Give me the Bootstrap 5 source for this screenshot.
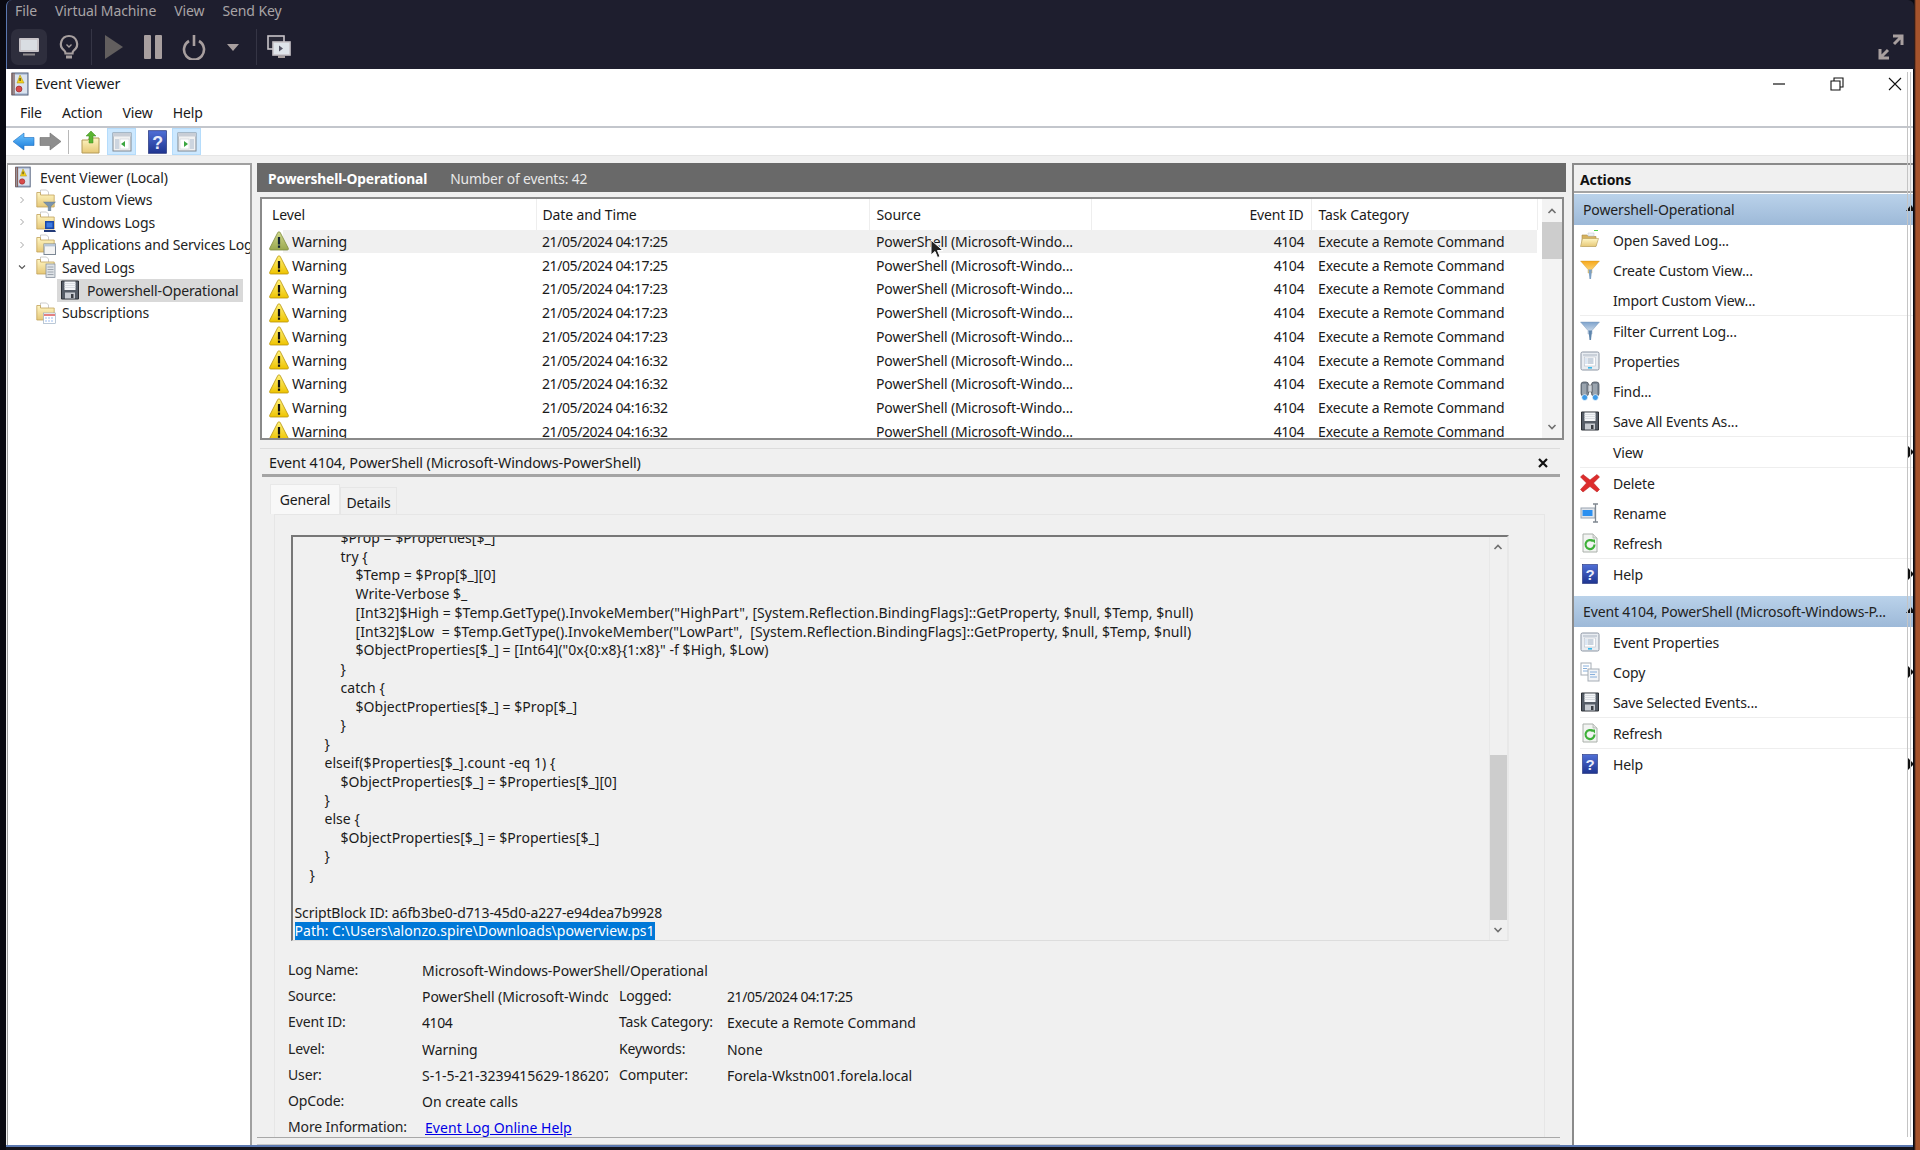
<!doctype html>
<html lang="en">
<head>
<meta charset="utf-8">
<title>Event Viewer</title>
<link href="https://cdn.jsdelivr.net/npm/bootstrap@5.3.0/dist/css/bootstrap.min.css" rel="stylesheet">
<style>
html,body{height:1150px;overflow:hidden}
body{background:linear-gradient(90deg,#0a0a12 0 1914px,#a5532c 1916px);font-family:"Noto Sans","Liberation Sans",sans-serif;font-size:14px;color:#1a1a1a;letter-spacing:-.13px}
.svg-defs{display:block;width:0;height:0}
.vm{height:1150px;margin-left:6px;width:1908px;position:relative}
.vm-top{height:69px;background:#1e1e2e;border-radius:6px 6px 0 0;flex:none;border-left:1px solid #5b78b0}
.vm-menu{height:23px;color:#a8a4a6;font-size:14px;padding:0 0 2px 8px;gap:18px;letter-spacing:-.1px}
.vm-tools{height:46px;padding:6px 0 4px 4px}
.vm-btn{height:36px;display:flex;align-items:center;justify-content:center}
.vm-btn svg{display:block}
.vm-on{background:#2e2e3d;border-radius:7px;width:36px}
.vm-bulb{width:36px;margin-left:4px}
.vm-play{width:44px}.vm-pause{width:34px}.vm-power{width:48px}.vm-caret{width:30px}.vm-screens{width:44px}
.vm-full{width:34px;margin-right:6px}
.vm-sep{width:1px;height:36px;background:#353545}
.win{flex:1 1 auto;background:#f0f0f0;min-height:0;width:1907px}
.win-title{height:31px;background:#fff;padding:0 0 2px 4px;gap:5px;font-size:14.400px;flex:none}
.winbtns{margin-left:auto;gap:40px;padding-right:9.500px}
.win-menu{height:26px;background:#fff;padding:0 0 2px 14px;gap:20px;font-size:14px;flex:none}
.win-line{height:2px;background:#c3c6cc;flex:none}
.win-tool{height:27px;background:#fff;flex:none;padding-left:6px}
.tb{width:29px;height:27px;display:flex;align-items:center;justify-content:center}
.tb-on{background:#cce8ff;border:1px solid #b5dcfb}
.tb-up{margin-left:3px;width:26px}
.tb-on1{margin-left:3px}
.tb-help{margin-left:9px;width:24px}
.tb-on2{margin-left:3px}
.tb-sep{width:1px;height:24px;background:#b8b8b8;margin:0 6px}
.win-band{height:8px;flex:none;background:#f0f0f0;border-top:1px solid #e6e6e6}
.main-area{flex:1 1 auto;min-height:0}
.tree{width:245px;margin-left:1px;background:#fff;border:1px solid #a0a0a0;border-width:2px 2px 0 1px;padding-top:1px;overflow:hidden;white-space:nowrap;flex:none}
.tree-row{height:22.500px;display:flex;align-items:center;font-size:14px;color:#222}
.chev{width:22px;flex:none;padding-left:10px;display:flex}
.ico{flex:none;display:block}
.tree-row .ico{margin-right:6px}
.tree-row .fld{margin-left:6px}
.tree-row .rootico{margin-left:6px;margin-right:8px}
.tree-sel{background:#d9d9d9;height:23px;margin:0 7px 0 49px;padding-left:3px}
.tree-sel .ico{margin-right:7px}
.center{width:1309px;margin-left:5px;flex:none;display:flex;flex-direction:column;min-height:0}
.hd-dark{height:29px;background:#696969;color:#e8e8e8;padding:3px 0 0 11px;gap:23px;flex:none;font-size:13.800px}
.hd-dark b{color:#fff;font-weight:700}
.listbox{height:243px;margin:5px 2px 0 3px;background:#fff;border:2px solid #8a8a8a;overflow:hidden;flex:none;padding-left:3px}
.lst{width:1272px;flex:none}
.evt{table-layout:fixed;width:1272px;margin:0;--bs-table-bg:transparent;--bs-table-color:#1a1a1a;font-size:14px;white-space:nowrap}
.evt col:nth-child(1){width:271px}.evt col:nth-child(2){width:333px}.evt col:nth-child(3){width:222px}.evt col:nth-child(4){width:220px}.evt col:nth-child(5){width:226px}
.evt th,.evt td{padding:0 0 0 7px;border:0;font-weight:400;vertical-align:middle;overflow:hidden}
.evt thead th{height:30.500px;border-right:1px solid #eee;padding-top:1px}
.evt tbody td{height:23.750px}
.evt td:nth-child(2),.evt th:nth-child(2){padding-left:6px}
.evt td.cell-id,.evt th.cell-id{text-align:right;padding:0 7px 0 0}
.evt tr.rsel td{background:#f0f0f0}
.evt tr.rsel td:first-child{background:linear-gradient(90deg,#fff 18px,#f0f0f0 18px)}
.num{letter-spacing:-.42px}
.lvl{display:flex;align-items:center;gap:3px;margin-left:-3px}
.sb-v{width:20px;flex:none;background:#f3f3f3;display:flex;flex-direction:column;align-items:center;margin-left:5px;height:100%}
.sb-arrow{height:23px;display:flex;align-items:center;justify-content:center;flex:none;width:100%}
.sb-thumb{background:#cdcdcd;width:100%;flex:none}
.thumb-a{height:37px}.thumb-b{height:165px}
.detail{flex:1 1 auto;min-height:0;margin:8px 6px 0 3px;border-top:1px solid #dcdcdc;display:flex;flex-direction:column}
.dt-head{height:28px;padding:2px 0 0 7px;flex:none;border-bottom:3px solid #a4a4a4;margin-left:2px;font-size:14.350px;letter-spacing:-.1px}
.dt-close{margin-right:11px}
.dt-body{padding:6px 0 0 10px;flex:1 1 auto;min-height:0;overflow:hidden;background:#f0f0f0}
.dt-tabs{height:31px;align-items:flex-end;--bs-nav-tabs-border-width:0;border:0;flex-wrap:nowrap}
.dt-tabs .nav-link{color:#1a1a1a;border:0;border-radius:0;padding:0;margin:0;display:flex;align-items:center;justify-content:center}
.dt-tabs .tab-a{width:70px;height:30px;background:#f8f8f8;border:1px solid #e8e8e8;border-bottom:0}
.dt-tabs .tab-b{width:57px;height:27px;background:#f0f0f0;border:1px solid #e6e6e6;border-bottom:0;padding-top:3px}
.pane{margin:0 15px 0 4px;padding:20px 0 0 15.500px;border:1px solid #e6e6e6;height:640px;background:#f0f0f0}
.codebox{width:1218px;height:406px;border-left:2px solid #777;border-top:2px solid #777;border-bottom:1px solid #ddd;border-right:2px solid #e8e8e8;overflow:hidden;flex:none;background:#f0f0f0}
.codetxt{flex:1 1 auto;padding:0 0 0 2px;margin-top:-8px;white-space:pre;line-height:18.730px;font-size:14px;min-width:0;overflow:hidden;letter-spacing:.05px}
.ln-id{letter-spacing:-.1px}
.ln-path{letter-spacing:.03px}
.i1{padding-left:15px}.i2{padding-left:30px}.i3{padding-left:46px}.i4{padding-left:61px}
.sel-txt{background:#0078d7;color:#fff;display:inline-block;height:18px;line-height:17px}
.sb-w{width:18px;height:100%;flex:none;background:#f0f0f0;display:flex;flex-direction:column;border-left:1px solid #e8e8e8}
.sb-w .sb-arrow{height:20px}
.fields{margin:16px 0 0 -2.500px;font-size:14px;line-height:26.200px;white-space:nowrap}
.f-l{width:134px;flex:none;color:#222}
.f-v{position:relative;top:1px;letter-spacing:-.03px}
.f-v.num{letter-spacing:-.42px}
.f-v1{width:186px;margin-right:11px;overflow:hidden;flex:none}
.f-l2{width:108px;flex:none}
.f-link{color:#0000e6;text-decoration:underline;margin-left:3px;letter-spacing:.05px}
.bottom-strip{height:8px;border-top:1px solid #a8a8a8;border-bottom:1px solid #c8c8c8;background:#f0f0f0;margin:0 6px 0 0;flex:none}
.actions{flex:1 1 auto;margin-left:6px;background:#fff;border-left:2px solid #8a8a8a;border-top:2px solid #8a8a8a;min-width:0;overflow:hidden;white-space:nowrap;font-size:14px}
.ac-hd{height:28px;margin-bottom:1px;background:#f0f0f0;padding:3px 0 0 6px;font-weight:700;border-bottom:2px solid #a4a4a4;color:#111;display:flex;align-items:center}
.ac-sec{height:31px;padding-left:9px;background:linear-gradient(#bad2ea,#9db9d8);color:#222;display:flex;align-items:center;position:relative;flex:none}
.ac-sec::after{content:"";border:5px solid transparent;border-top:0;border-bottom:6px solid #111;position:absolute;right:-3px;top:11px}
.ac-row{height:30px;padding-left:6px;display:flex;align-items:center;position:relative;color:#222}
.ac-row .ico{width:20px;height:20px}
.ac-row span{margin-left:13px}
.ac-row .noi{width:20px;flex:none}
.sub::after{content:"";border:6px solid transparent;border-right:0;border-left:6px solid #111;position:absolute;right:-1px;top:9px}
.ac-sep{height:1px;background:#eee;margin:0 0 0 6px;flex:none}
.ac-gap{height:7px}
.bottom-line{height:5px;background:linear-gradient(#5b78b0 0 2px,#14141c 2px);flex:none;width:1907px}
.rail{position:absolute;left:1901px;top:72px;width:4px;height:1065px;border:1px solid #c4c4c4;border-width:0 1px;pointer-events:none}
.cursor{position:absolute;left:924px;top:239px}
</style>
</head>
<body>
<svg class="svg-defs" aria-hidden="true">
<defs>
<linearGradient id="gy" x1="0" y1="0" x2="0" y2="1"><stop offset="0" stop-color="#fff27a"/><stop offset="1" stop-color="#eec300"/></linearGradient>
<linearGradient id="gd" x1="0" y1="0" x2="0" y2="1"><stop offset="0" stop-color="#cfd88c"/><stop offset="1" stop-color="#9aa84e"/></linearGradient>
<linearGradient id="gf" x1="0" y1="0" x2="0" y2="1"><stop offset="0" stop-color="#fff6c4"/><stop offset="1" stop-color="#e6c877"/></linearGradient>
<linearGradient id="gb" x1="0" y1="0" x2="0" y2="1"><stop offset="0" stop-color="#4f6fd6"/><stop offset="1" stop-color="#1f3590"/></linearGradient>
<linearGradient id="gar" x1="0" y1="0" x2="0" y2="1"><stop offset="0" stop-color="#6ec6ff"/><stop offset="1" stop-color="#1878d8"/></linearGradient>
<linearGradient id="gfn" x1="0" y1="0" x2="0" y2="1"><stop offset="0" stop-color="#7ea3cc"/><stop offset="1" stop-color="#dfe8f2"/></linearGradient>
<linearGradient id="gfo" x1="0" y1="0" x2="0" y2="1"><stop offset="0" stop-color="#f6a81c"/><stop offset="1" stop-color="#ffe08a"/></linearGradient>
<symbol id="warn" viewBox="0 0 20 20"><path d="M10 .8c.6 0 1 .3 1.300.9l8 15.600c.4.8 0 1.700-1 1.700H1.700c-1 0-1.400-.9-1-1.700l8-15.600c.3-.6.7-.9 1.300-.9z" fill="url(#gy)" stroke="#b8930a" stroke-width=".8"/><rect x="8.900" y="6" width="2.200" height="7.500" fill="#111"/><rect x="8.900" y="14.500" width="2.200" height="2.300" fill="#111"/></symbol>
<symbol id="warn2" viewBox="0 0 20 20"><path d="M10 .8c.6 0 1 .3 1.300.9l8 15.600c.4.8 0 1.700-1 1.700H1.700c-1 0-1.400-.9-1-1.700l8-15.600c.3-.6.7-.9 1.300-.9z" fill="url(#gd)" stroke="#7d8a3c" stroke-width=".8"/><rect x="8.900" y="6" width="2.200" height="7.500" fill="#123"/><rect x="8.900" y="14.500" width="2.200" height="2.300" fill="#123"/></symbol>
<symbol id="evlog" viewBox="0 0 20 24"><rect x="2" y="1" width="16" height="22" fill="#b7c6dc" stroke="#54627c"/><path d="M2 1v22M4 1v22" stroke="#7b4b3a" stroke-width="1"/><rect x="5" y="3" width="12" height="18" fill="#dbe3ee"/><path d="M10 3l4 8H7z" fill="#f3d11f" stroke="#a98c0a" stroke-width=".5"/><rect x="9.600" y="6" width=".9" height="3" fill="#111"/><circle cx="9" cy="17" r="3" fill="#d94b4b" stroke="#8b1f1f" stroke-width=".6"/></symbol>
<symbol id="fold" viewBox="0 0 20 22"><path d="M4.500 1h6l2 2v6h-8z" fill="#fff" stroke="#b8b8b8" stroke-width=".7"/><path d="M.8 3.500h3.700v2.500h13.700v12H.8z" fill="url(#gf)" stroke="#c2a25a" stroke-width=".8"/></symbol>
<symbol id="fold-f" viewBox="0 0 20 22"><use href="#fold" width="20" height="22"/><path d="M7.500 13h12l-4.700 4.500V22h-2.600v-4.500z" fill="#7a93ad" stroke="#566e88" stroke-width=".4"/></symbol>
<symbol id="fold-w" viewBox="0 0 20 22"><use href="#fold" width="20" height="22"/><rect x="9" y="10" width="9" height="8" fill="#1947a8"/><rect x="10.500" y="11.500" width="6" height="5" fill="#3d7be0"/><path d="M8 19h11l1 2H8z" fill="#223a78"/></symbol>
<symbol id="fold-a" viewBox="0 0 20 22"><use href="#fold" width="20" height="22"/><rect x="8" y="10" width="11.500" height="10.500" fill="#f4f4f4" stroke="#7c8794"/><rect x="8" y="10" width="11.500" height="2.400" fill="#b8c6d6"/></symbol>
<symbol id="fold-s" viewBox="0 0 20 22"><use href="#fold" width="20" height="22"/><rect x="10" y="8" width="9" height="13.500" fill="#dfe3e7" stroke="#7c8794" stroke-width=".7"/><path d="M11.500 11h6M11.500 13.500h6M11.500 16h6M11.500 18.500h6" stroke="#8d97a2" stroke-width=".8"/></symbol>
<symbol id="fold-c" viewBox="0 0 20 22"><use href="#fold" width="20" height="22"/><rect x="7.500" y="11" width="12" height="10.500" fill="#fff" stroke="#8da3bb" stroke-width=".6"/><path d="M8 13h11" stroke="#d94b4b" stroke-width="1.400"/><path d="M9.500 16h1M12.500 16h1M15.500 16h1M9.500 19h1M12.500 19h1M15.500 19h1" stroke="#3d7be0" stroke-width="1.200"/></symbol>
<symbol id="floppy" viewBox="0 0 20 20"><path d="M1.500 1h17v18h-17z" fill="#555c66" stroke="#2c3036"/><rect x="4.500" y="1.500" width="11" height="8.500" fill="#f4f6f8"/><path d="M4.500 3.500h11M4.500 5.500h11M4.500 7.500h11" stroke="#cfd4da" stroke-width=".7"/><rect x="5" y="12.500" width="10" height="6" fill="#c8ccd2"/><rect x="11" y="14" width="2.500" height="4" fill="#3b3f45"/></symbol>
<symbol id="props" viewBox="0 0 20 20"><rect x="1" y="1" width="18" height="18" rx="1.500" fill="#e9edf2" stroke="#8b95a3"/><rect x="3" y="3" width="14" height="2" fill="#c9d0d9"/><rect x="4.500" y="6" width="11" height="9" fill="#fff" stroke="#b9c0ca" stroke-width=".6"/><path d="M7.500 8h6M7.500 10h6M7.500 12h6" stroke="#7c93ad" stroke-width=".8"/><path d="M5.500 8h1M5.500 10h1M5.500 12h1" stroke="#4f86c6" stroke-width=".8"/><rect x="8" y="16" width="4" height="1.600" fill="#38b6e8"/></symbol>
<symbol id="help" viewBox="2 0 16 20"><rect x="2.500" y="0.500" width="15" height="19" fill="url(#gb)" stroke="#1e2e78" stroke-width=".6"/><text x="10" y="15.500" text-anchor="middle" font-family="Liberation Sans" font-size="15" font-weight="700" fill="#e8ecfa">?</text></symbol>
<symbol id="refresh" viewBox="0 0 20 20"><path d="M3 1h10l4 4v14H3z" fill="#f2f4f2" stroke="#aab0aa"/><path d="M13 1v4h4" fill="#dde0dd" stroke="#aab0aa" stroke-width=".7"/><path d="M14.500 11.500a4.500 4.500 0 1 1-1.500-3.300" fill="none" stroke="#3fb13a" stroke-width="2.200"/><path d="M11 6.500h4v4z" fill="#3fb13a"/></symbol>
<symbol id="del" viewBox="0 0 20 20"><path d="M3 1.500l7 5.500 7-5.500 2.500 2.500-6 6 6 6.500-2.500 2.500-7-5.500-7 5.500L.5 16.500l6-6.500-6-6z" fill="#dd2c2c" stroke="#b71c1c" stroke-width=".5"/></symbol>
<symbol id="rename" viewBox="0 0 20 20"><rect x="1" y="5" width="14" height="10" fill="#e0e4ea" stroke="#9aa4b0"/><rect x="2.500" y="7" width="10" height="6" fill="#2a8ff0"/><path d="M13 1h5M13 19h5M15.500 1v18" stroke="#7f8790" stroke-width="1.300" fill="none"/></symbol>
<symbol id="open" viewBox="0 0 20 20"><path d="M2 5h5l1.500 1.500H16V16H2z" fill="#d6b25e" stroke="#a88c46" stroke-width=".6"/><path d="M0.500 16.500l2-8h16l-2.500 8z" fill="url(#gf)" stroke="#b49a58" stroke-width=".6"/><path d="M8 3h6v3h-6z" fill="#eef2f6" stroke="#b9c0c8" stroke-width=".5"/><rect x="14" y="0" width="4" height="1" fill="#4dd04d"/></symbol>
<symbol id="funnelo" viewBox="0 0 20 20"><path d="M0.500 1h19l-7.500 8.500V13h-4V9.500z" fill="url(#gfo)" stroke="#b78418" stroke-width=".3"/><path d="M8.500 9.500H12L11 19H9.500z" fill="#7da0c4"/></symbol>
<symbol id="funnel" viewBox="0 0 20 20"><path d="M0.500 1h19l-7.500 8.500V13h-4V9.500z" fill="url(#gfn)" stroke="#6f90b4" stroke-width=".4"/><path d="M8.500 9.500H12L11 19H9.500z" fill="#5f86ad"/></symbol>
<symbol id="bino" viewBox="0 0 20 20"><rect x="1" y="1" width="7.500" height="14" rx="2.500" fill="#7c8794" stroke="#3e4650" stroke-width=".7"/><rect x="11.500" y="1" width="7.500" height="14" rx="2.500" fill="#7c8794" stroke="#3e4650" stroke-width=".7"/><rect x="8" y="4" width="4" height="7" fill="#cfd5dc" stroke="#555" stroke-width=".5"/><path d="M3 3v10M5 3v10M14 3v10M16 3v10" stroke="#d6dbe1" stroke-width=".7"/><circle cx="4.700" cy="16.500" r="3" fill="#3f9be8" stroke="#fff" stroke-width=".7"/><circle cx="15.300" cy="16.500" r="3" fill="#3f9be8" stroke="#fff" stroke-width=".7"/></symbol>
<symbol id="copy" viewBox="0 0 20 20"><rect x="1" y="1" width="10" height="12" fill="#fff" stroke="#a6adb5"/><path d="M3 4h6M3 6.500h4M3 9h6" stroke="#7aa7d8" stroke-width=".9"/><rect x="8" y="7" width="11" height="12" fill="#f2f4f7" stroke="#a6adb5"/><path d="M10 10h7M10 12.500h5M10 15h7" stroke="#7aa7d8" stroke-width=".9"/></symbol>
<symbol id="chr" viewBox="0 0 8 8"><path d="M2.500 1l3 3-3 3" fill="none" stroke="#a6a6a6" stroke-width="1"/></symbol>
<symbol id="chd" viewBox="0 0 8 8"><path d="M1 2.500l3 3 3-3" fill="none" stroke="#555" stroke-width="1.100"/></symbol>
<symbol id="chup" viewBox="0 0 10 8"><path d="M1.500 6L5 2.500 8.500 6" fill="none" stroke="#707070" stroke-width="1.600"/></symbol>
<symbol id="chdn" viewBox="0 0 10 8"><path d="M1.500 2L5 5.500 8.500 2" fill="none" stroke="#707070" stroke-width="1.600"/></symbol>
</defs>
</svg>

<div class="vm d-flex flex-column">
  <div class="vm-top">
    <div class="vm-menu d-flex align-items-center"><span>File</span><span>Virtual Machine</span><span>View</span><span>Send Key</span></div>
    <div class="vm-tools d-flex align-items-center">
      <div class="vm-btn vm-on"><svg width="24" height="24" viewBox="0 0 24 24"><rect x="2" y="3" width="20" height="14" rx="1" fill="#c8c4c8"/><rect x="4" y="5" width="16" height="10" fill="#d9dde2"/><rect x="6" y="18.500" width="12" height="2" fill="#8e8a8c"/></svg></div>
      <div class="vm-btn vm-bulb"><svg width="22" height="26" viewBox="0 0 22 26"><path d="M11 2a8 8 0 0 0-5 14.300c1 .9 1.500 2 1.500 3.200h7c0-1.200.5-2.300 1.500-3.200A8 8 0 0 0 11 2z" fill="none" stroke="#a79f9f" stroke-width="2.200"/><rect x="8" y="21.500" width="6" height="3" fill="#a79f9f"/><path d="M8.500 10.500L11 13l2.500-2.500" fill="none" stroke="#a79f9f" stroke-width="1.300"/></svg></div>
      <div class="vm-sep ms-1"></div>
      <div class="vm-btn vm-play"><svg width="20" height="26" viewBox="0 0 20 26"><path d="M1 1l18 12L1 25z" fill="#625e5e"/></svg></div>
      <div class="vm-btn vm-pause"><svg width="20" height="26" viewBox="0 0 20 26"><rect x="1" y="1" width="7" height="24" rx="1" fill="#a89f9f"/><rect x="12" y="1" width="7" height="24" rx="1" fill="#a89f9f"/></svg></div>
      <div class="vm-btn vm-power"><svg width="24" height="26" viewBox="0 0 24 26"><path d="M7 7a10 10 0 1 0 10 0" fill="none" stroke="#a89f9f" stroke-width="2.600"/><path d="M12 1v11" stroke="#a89f9f" stroke-width="2.600"/></svg></div>
      <div class="vm-btn vm-caret"><svg width="12" height="7" viewBox="0 0 12 7"><path d="M0 0h12L6 7z" fill="#a89f9f"/></svg></div>
      <div class="vm-sep ms-2"></div>
      <div class="vm-btn vm-screens"><svg width="24" height="24" viewBox="0 0 24 24"><rect x="1" y="1" width="16" height="13" fill="#2a2a38" stroke="#c8c4c8" stroke-width="1.600"/><rect x="6" y="7" width="17" height="13" fill="#dfe4ea" stroke="#c8c4c8" stroke-width="1.600"/><path d="M12 10.500l4 3-4 3z" fill="#556"/><rect x="11" y="21" width="7" height="2" fill="#a89f9f"/></svg></div>
      <div class="vm-btn vm-full ms-auto"><svg width="26" height="26" viewBox="0 0 26 26"><path d="M15 2h9v9M24 2L16 10M11 24H2v-9M2 24l8-8" fill="none" stroke="#a89f9f" stroke-width="3"/></svg></div>
    </div>
  </div>

  <div class="win d-flex flex-column">
    <div class="win-title d-flex align-items-center">
      <svg class="ico" width="20" height="24"><use href="#evlog"/></svg><span>Event Viewer</span>
      <div class="winbtns d-flex align-items-center">
        <svg width="18" height="18" viewBox="0 0 18 18"><path d="M3 9h12" stroke="#111" stroke-width="1.200"/></svg>
        <svg width="18" height="18" viewBox="0 0 18 18"><path d="M3 6h9v9H3zM6 6V3h9v9h-3" fill="none" stroke="#111" stroke-width="1.100"/></svg>
        <svg width="18" height="18" viewBox="0 0 18 18"><path d="M3 3l12 12M15 3L3 15" stroke="#111" stroke-width="1.100"/></svg>
      </div>
    </div>
    <div class="win-menu d-flex align-items-center"><span>File</span><span>Action</span><span>View</span><span>Help</span></div>
    <div class="win-line"></div>
    <div class="win-tool d-flex align-items-center">
      <svg width="23" height="23" viewBox="0 0 23 23"><path d="M1 11.500L12 3v4.500h10v8H12V20z" fill="url(#gar)" stroke="#1c6dc0" stroke-width=".6"/></svg>
      <svg class="ms-1" width="23" height="23" viewBox="0 0 23 23"><path d="M22 11.500L11 3v4.500H1v8h10V20z" fill="#8e8e8e" stroke="#6f6f6f" stroke-width=".6"/></svg>
      <div class="tb-sep"></div>
      <div class="tb tb-up"><svg width="20" height="24" viewBox="0 0 20 24"><path d="M1 10h6l1.500-2H18v15H1z" fill="url(#gf)" stroke="#b49a58"/><path d="M8 13V6H5l5-5 5 5h-3v7z" fill="#5cb533" stroke="#3d8a1e" stroke-width=".5"/></svg></div>
      <div class="tb tb-on tb-on1"><svg width="20" height="20" viewBox="0 0 20 20"><rect x="1" y="1" width="18" height="18" fill="#f2f2f2" stroke="#7f8792"/><rect x="1" y="1" width="18" height="3.500" fill="#c9ced6"/><rect x="3" y="7" width="4" height="10" fill="#cdd5df"/><rect x="8" y="7" width="9" height="10" fill="#fff" stroke="#c2c8d0" stroke-width=".5"/><path d="M13 9l-4 3 4 3z" fill="#3aa640"/></svg></div>
      <div class="tb tb-help"><svg width="19" height="24"><use href="#help"/></svg></div>
      <div class="tb tb-on tb-on2"><svg width="20" height="20" viewBox="0 0 20 20"><rect x="1" y="1" width="18" height="18" fill="#f2f2f2" stroke="#7f8792"/><rect x="1" y="1" width="18" height="3.500" fill="#c9ced6"/><rect x="13" y="7" width="4" height="10" fill="#cdd5df"/><rect x="3" y="7" width="9" height="10" fill="#fff" stroke="#c2c8d0" stroke-width=".5"/><path d="M7 9l4 3-4 3z" fill="#3aa640"/></svg></div>
    </div>
    <div class="win-band"></div>

    <div class="main-area d-flex">
      <div class="tree">
        <div class="tree-row"><svg class="ico rootico" width="18" height="22"><use href="#evlog"/></svg><span>Event Viewer (Local)</span></div>
        <div class="tree-row"><span class="chev"><svg width="8" height="8"><use href="#chr"/></svg></span><svg class="ico fld" width="20" height="22"><use href="#fold-f"/></svg><span>Custom Views</span></div>
        <div class="tree-row"><span class="chev"><svg width="8" height="8"><use href="#chr"/></svg></span><svg class="ico fld" width="20" height="22"><use href="#fold-w"/></svg><span>Windows Logs</span></div>
        <div class="tree-row"><span class="chev"><svg width="8" height="8"><use href="#chr"/></svg></span><svg class="ico fld" width="20" height="22"><use href="#fold-a"/></svg><span>Applications and Services Logs</span></div>
        <div class="tree-row"><span class="chev"><svg width="8" height="8"><use href="#chd"/></svg></span><svg class="ico fld" width="20" height="22"><use href="#fold-s"/></svg><span>Saved Logs</span></div>
        <div class="tree-row tree-sel"><svg class="ico" width="20" height="20"><use href="#floppy"/></svg><span>Powershell-Operational</span></div>
        <div class="tree-row"><span class="chev"></span><svg class="ico fld" width="20" height="22"><use href="#fold-c"/></svg><span>Subscriptions</span></div>
      </div>

      <div class="center">
        <div class="hd-dark d-flex align-items-center"><b>Powershell-Operational</b><span>Number of events: 42</span></div>
        <div class="listbox d-flex">
          <div class="lst">
            <table class="table table-borderless evt">
              <colgroup><col><col><col><col><col></colgroup>
              <thead><tr><th>Level</th><th>Date and Time</th><th>Source</th><th class="cell-id">Event ID</th><th>Task Category</th></tr></thead>
              <tbody>
                <tr class="rsel"><td><div class="lvl"><svg class="ico" width="20" height="20"><use href="#warn2"/></svg>Warning</div></td><td class="num">21/05/2024 04:17:25</td><td>PowerShell (Microsoft-Windo...</td><td class="cell-id num">4104</td><td>Execute a Remote Command</td></tr>
                <tr><td><div class="lvl"><svg class="ico" width="20" height="20"><use href="#warn"/></svg>Warning</div></td><td class="num">21/05/2024 04:17:25</td><td>PowerShell (Microsoft-Windo...</td><td class="cell-id num">4104</td><td>Execute a Remote Command</td></tr>
                <tr><td><div class="lvl"><svg class="ico" width="20" height="20"><use href="#warn"/></svg>Warning</div></td><td class="num">21/05/2024 04:17:23</td><td>PowerShell (Microsoft-Windo...</td><td class="cell-id num">4104</td><td>Execute a Remote Command</td></tr>
                <tr><td><div class="lvl"><svg class="ico" width="20" height="20"><use href="#warn"/></svg>Warning</div></td><td class="num">21/05/2024 04:17:23</td><td>PowerShell (Microsoft-Windo...</td><td class="cell-id num">4104</td><td>Execute a Remote Command</td></tr>
                <tr><td><div class="lvl"><svg class="ico" width="20" height="20"><use href="#warn"/></svg>Warning</div></td><td class="num">21/05/2024 04:17:23</td><td>PowerShell (Microsoft-Windo...</td><td class="cell-id num">4104</td><td>Execute a Remote Command</td></tr>
                <tr><td><div class="lvl"><svg class="ico" width="20" height="20"><use href="#warn"/></svg>Warning</div></td><td class="num">21/05/2024 04:16:32</td><td>PowerShell (Microsoft-Windo...</td><td class="cell-id num">4104</td><td>Execute a Remote Command</td></tr>
                <tr><td><div class="lvl"><svg class="ico" width="20" height="20"><use href="#warn"/></svg>Warning</div></td><td class="num">21/05/2024 04:16:32</td><td>PowerShell (Microsoft-Windo...</td><td class="cell-id num">4104</td><td>Execute a Remote Command</td></tr>
                <tr><td><div class="lvl"><svg class="ico" width="20" height="20"><use href="#warn"/></svg>Warning</div></td><td class="num">21/05/2024 04:16:32</td><td>PowerShell (Microsoft-Windo...</td><td class="cell-id num">4104</td><td>Execute a Remote Command</td></tr>
                <tr><td><div class="lvl"><svg class="ico" width="20" height="20"><use href="#warn"/></svg>Warning</div></td><td class="num">21/05/2024 04:16:32</td><td>PowerShell (Microsoft-Windo...</td><td class="cell-id num">4104</td><td>Execute a Remote Command</td></tr>
              </tbody>
            </table>
          </div>
          <div class="sb-v">
            <div class="sb-arrow"><svg width="10" height="8"><use href="#chup"/></svg></div>
            <div class="sb-thumb thumb-a"></div>
            <div class="flex-grow-1"></div>
            <div class="sb-arrow"><svg width="10" height="8"><use href="#chdn"/></svg></div>
          </div>
        </div>

        <div class="detail">
          <div class="dt-head d-flex align-items-center"><span>Event 4104, PowerShell (Microsoft-Windows-PowerShell)</span>
            <svg class="ms-auto dt-close" width="12" height="12" viewBox="0 0 12 12"><path d="M2 2l8 8M10 2l-8 8" stroke="#111" stroke-width="2.200"/></svg></div>
          <div class="dt-body">
            <ul class="nav nav-tabs dt-tabs"><li class="nav-item"><a class="nav-link tab-a" href="#">General</a></li><li class="nav-item"><a class="nav-link tab-b" href="#">Details</a></li></ul>
            <div class="pane">
              <div class="codebox d-flex">
                <div class="codetxt"><div class="i3">$Prop = $Properties[$_]</div><div class="i3">try {</div><div class="i4">$Temp = $Prop[$_][0]</div><div class="i4">Write-Verbose $_</div><div class="i4">[Int32]$High = $Temp.GetType().InvokeMember("HighPart", [System.Reflection.BindingFlags]::GetProperty, $null, $Temp, $null)</div><div class="i4">[Int32]$Low  = $Temp.GetType().InvokeMember("LowPart",  [System.Reflection.BindingFlags]::GetProperty, $null, $Temp, $null)</div><div class="i4">$ObjectProperties[$_] = [Int64]("0x{0:x8}{1:x8}" -f $High, $Low)</div><div class="i3">}</div><div class="i3">catch {</div><div class="i4">$ObjectProperties[$_] = $Prop[$_]</div><div class="i3">}</div><div class="i2">}</div><div class="i2">elseif($Properties[$_].count -eq 1) {</div><div class="i3">$ObjectProperties[$_] = $Properties[$_][0]</div><div class="i2">}</div><div class="i2">else {</div><div class="i3">$ObjectProperties[$_] = $Properties[$_]</div><div class="i2">}</div><div class="i1">}</div><div>&nbsp;</div><div class="ln-id">ScriptBlock ID: a6fb3be0-d713-45d0-a227-e94dea7b9928</div><div class="ln-path"><span class="sel-txt">Path: C:\Users\alonzo.spire\Downloads\powerview.ps1</span></div></div>
                <div class="sb-w">
                  <div class="sb-arrow"><svg width="10" height="8"><use href="#chup"/></svg></div>
                  <div class="flex-grow-1"></div>
                  <div class="sb-thumb thumb-b"></div>
                  <div class="sb-arrow"><svg width="10" height="8"><use href="#chdn"/></svg></div>
                </div>
              </div>
              <div class="fields">
                <div class="d-flex"><div class="f-l">Log Name:</div><div class="f-v">Microsoft-Windows-PowerShell/Operational</div></div>
                <div class="d-flex"><div class="f-l">Source:</div><div class="f-v f-v1">PowerShell (Microsoft-Windows-PowerShell)</div><div class="f-l2">Logged:</div><div class="f-v num">21/05/2024 04:17:25</div></div>
                <div class="d-flex"><div class="f-l">Event ID:</div><div class="f-v f-v1 num">4104</div><div class="f-l2">Task Category:</div><div class="f-v">Execute a Remote Command</div></div>
                <div class="d-flex"><div class="f-l">Level:</div><div class="f-v f-v1">Warning</div><div class="f-l2">Keywords:</div><div class="f-v">None</div></div>
                <div class="d-flex"><div class="f-l">User:</div><div class="f-v f-v1">S-1-5-21-3239415629-1862073780-2394361899-1601</div><div class="f-l2">Computer:</div><div class="f-v">Forela-Wkstn001.forela.local</div></div>
                <div class="d-flex"><div class="f-l">OpCode:</div><div class="f-v">On create calls</div></div>
                <div class="d-flex"><div class="f-l">More Information:</div><div class="f-v"><a class="f-link" href="#">Event Log Online Help</a></div></div>
              </div>
            </div>
          </div>
        </div>
        <div class="bottom-strip"></div>
      </div>

      <div class="actions">
        <div class="ac-hd">Actions</div>
        <div class="ac-sec">Powershell-Operational</div>
        <div class="ac-row"><svg class="ico"><use href="#open"/></svg><span>Open Saved Log...</span></div>
        <div class="ac-row"><svg class="ico"><use href="#funnelo"/></svg><span>Create Custom View...</span></div>
        <div class="ac-row"><div class="noi"></div><span>Import Custom View...</span></div>
        <div class="ac-sep"></div>
        <div class="ac-row"><svg class="ico"><use href="#funnel"/></svg><span>Filter Current Log...</span></div>
        <div class="ac-row"><svg class="ico"><use href="#props"/></svg><span>Properties</span></div>
        <div class="ac-row"><svg class="ico"><use href="#bino"/></svg><span>Find...</span></div>
        <div class="ac-row"><svg class="ico"><use href="#floppy"/></svg><span>Save All Events As...</span></div>
        <div class="ac-sep"></div>
        <div class="ac-row sub"><div class="noi"></div><span>View</span></div>
        <div class="ac-sep"></div>
        <div class="ac-row"><svg class="ico"><use href="#del"/></svg><span>Delete</span></div>
        <div class="ac-row"><svg class="ico"><use href="#rename"/></svg><span>Rename</span></div>
        <div class="ac-row"><svg class="ico"><use href="#refresh"/></svg><span>Refresh</span></div>
        <div class="ac-sep"></div>
        <div class="ac-row sub"><svg class="ico"><use href="#help"/></svg><span>Help</span></div>
        <div class="ac-gap"></div>
        <div class="ac-sec">Event 4104, PowerShell (Microsoft-Windows-P...</div>
        <div class="ac-row"><svg class="ico"><use href="#props"/></svg><span>Event Properties</span></div>
        <div class="ac-row sub"><svg class="ico"><use href="#copy"/></svg><span>Copy</span></div>
        <div class="ac-row"><svg class="ico"><use href="#floppy"/></svg><span>Save Selected Events...</span></div>
        <div class="ac-sep"></div>
        <div class="ac-row"><svg class="ico"><use href="#refresh"/></svg><span>Refresh</span></div>
        <div class="ac-sep"></div>
        <div class="ac-row sub"><svg class="ico"><use href="#help"/></svg><span>Help</span></div>
      </div>
    </div>
  </div>
  <div class="bottom-line"></div>
  <div class="rail"></div>
  <svg class="cursor" width="14" height="20" viewBox="0 0 14 20"><path d="M1 1v15l4-3.500 2.500 6 2.500-1-2.500-6H13z" fill="#222" stroke="#fff" stroke-width="1"/></svg>
</div>
<script src="https://cdn.jsdelivr.net/npm/bootstrap@5.3.0/dist/js/bootstrap.bundle.min.js"></script>
</body>
</html>
